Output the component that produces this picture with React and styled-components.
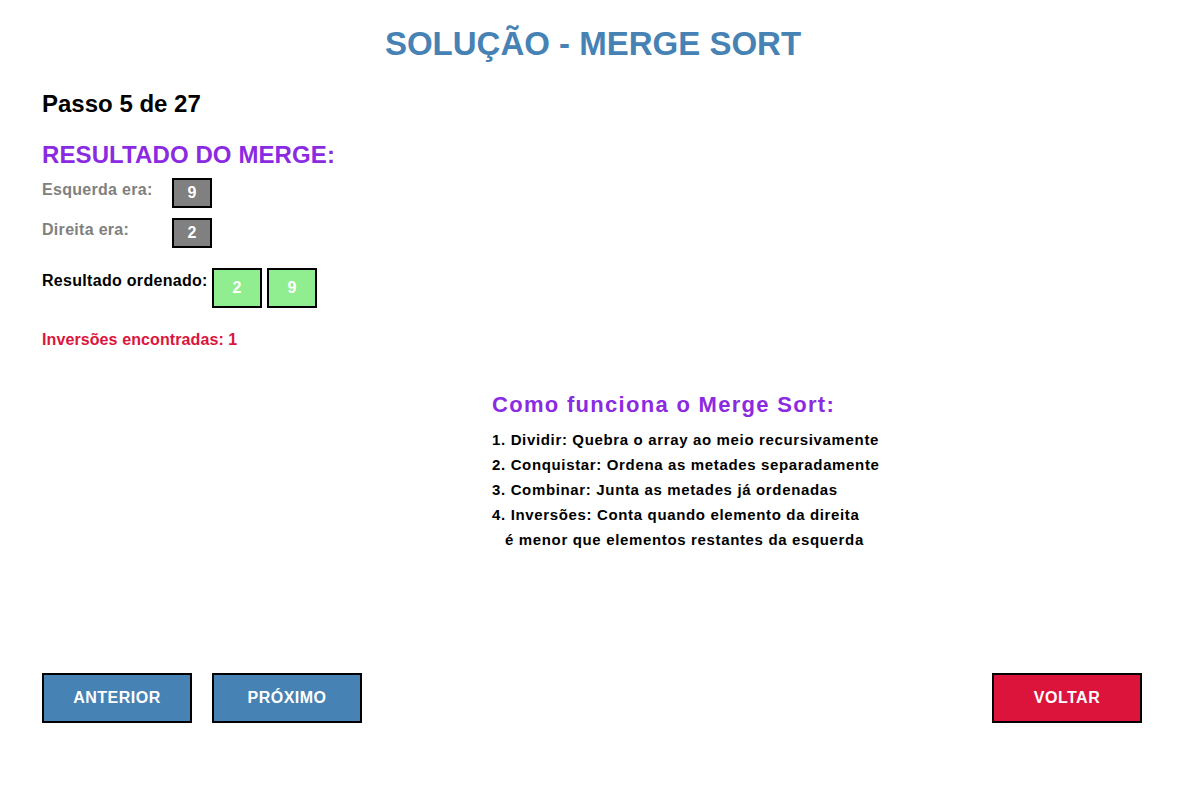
import styled, { createGlobalStyle } from "styled-components";

const GlobalStyle = createGlobalStyle`
  html, body {
    margin: 0;
    padding: 0;
    background: #ffffff;
  }
  body {
    font-family: "Liberation Sans", Arial, sans-serif;
  }
`;

const passos = [
  { n: 1, titulo: "Dividir", texto: "Quebra o array ao meio recursivamente" },
  { n: 2, titulo: "Conquistar", texto: "Ordena as metades separadamente" },
  { n: 3, titulo: "Combinar", texto: "Junta as metades já ordenadas" },
  { n: 4, titulo: "Inversões", texto: "Conta quando elemento da direita" },
];

function App() {
  return (
    <>
      <GlobalStyle />
      <Page>
        <Title>SOLUÇÃO - MERGE SORT</Title>
        <Step>Passo 5 de 27</Step>

        <MergeTitle>RESULTADO DO MERGE:</MergeTitle>
        <Row>
          <Label $muted>Esquerda era:</Label>
          <Cell $kind="old">9</Cell>
        </Row>
        <Row $gap={10}>
          <Label $muted>Direita era:</Label>
          <Cell $kind="old">2</Cell>
        </Row>
        <Row $gap={20}>
          <Label $wide $offset={5}>Resultado ordenado:</Label>
          <Cells>
            <Cell $kind="sorted">2</Cell>
            <Cell $kind="sorted">9</Cell>
          </Cells>
        </Row>
        <Inversions>Inversões encontradas: 1</Inversions>

        <Explain>
          <ExplainTitle>Como funciona o Merge Sort:</ExplainTitle>
          <List>
            {passos.map((p) => (
              <Line key={p.n}>
                {p.n}. {p.titulo}: {p.texto}
              </Line>
            ))}
            <Line $indent>é menor que elementos restantes da esquerda</Line>
          </List>
        </Explain>

        <Footer>
          <NavBtns>
            <Button>ANTERIOR</Button>
            <Button>PRÓXIMO</Button>
          </NavBtns>
          <Button $danger>VOLTAR</Button>
        </Footer>
      </Page>
    </>
  );
}

export default App;

const Page = styled.div`
  width: 1186px;
  height: 791px;
  box-sizing: border-box;
  padding: 27px 44px 0 42px;
  display: flex;
  flex-direction: column;
`;

const Title = styled.h1`
  margin: 0;
  padding-left: 2px;
  text-align: center;
  font-size: 33px;
  line-height: 33px;
  font-weight: 700;
  color: #4682b4;
`;

const Step = styled.h2`
  margin: 32px 0 0;
  font-size: 24px;
  line-height: 24px;
  font-weight: 700;
  color: #000;
`;

const MergeTitle = styled.h3`
  margin: 27px 0 0;
  font-size: 24px;
  line-height: 24px;
  font-weight: 700;
  letter-spacing: 0.1px;
  color: #8a2be2;
`;

const Row = styled.div`
  display: flex;
  align-items: flex-start;
  margin-top: ${(p) => p.$gap ?? 11}px;
`;

const Label = styled.span`
  width: ${(p) => (p.$wide ? 170 : 130)}px;
  margin-top: ${(p) => p.$offset ?? 4}px;
  font-size: 16px;
  line-height: 16px;
  font-weight: 700;
  letter-spacing: 0.3px;
  color: ${(p) => (p.$muted ? "#808080" : "#000")};
  white-space: nowrap;
`;

const Cells = styled.div`
  display: flex;
  gap: 5px;
`;

const Cell = styled.div`
  box-sizing: border-box;
  width: ${(p) => (p.$kind === "sorted" ? 50 : 40)}px;
  height: ${(p) => (p.$kind === "sorted" ? 40 : 30)}px;
  border: 2px solid #000;
  background: ${(p) => (p.$kind === "sorted" ? "#90ee90" : "#808080")};
  color: #fff;
  font-size: 16px;
  font-weight: 700;
  display: flex;
  align-items: center;
  justify-content: center;
`;

const Inversions = styled.p`
  margin: 24px 0 0;
  font-size: 16px;
  line-height: 16px;
  font-weight: 700;
  letter-spacing: 0.1px;
  color: #dc143c;
`;

const Explain = styled.section`
  margin: 46px 0 0 450px;
`;

const ExplainTitle = styled.h3`
  margin: 0;
  font-size: 22px;
  line-height: 22px;
  font-weight: 700;
  letter-spacing: 1.3px;
  color: #8a2be2;
`;

const List = styled.div`
  margin-top: 11px;
`;

const Line = styled.div`
  padding-left: ${(p) => (p.$indent ? 13 : 0)}px;
  font-size: 15px;
  line-height: 25px;
  font-weight: 700;
  letter-spacing: 0.65px;
  color: #000;
  white-space: nowrap;
`;

const Footer = styled.div`
  margin-top: 121px;
  display: flex;
  justify-content: space-between;
`;

const NavBtns = styled.div`
  display: flex;
  gap: 20px;
`;

const Button = styled.button`
  box-sizing: border-box;
  width: 150px;
  height: 50px;
  border: 2px solid #000;
  border-radius: 0;
  background: ${(p) => (p.$danger ? "#dc143c" : "#4682b4")};
  color: #fff;
  font-family: "Liberation Sans", Arial, sans-serif;
  font-size: 16px;
  font-weight: 700;
  letter-spacing: 0.5px;
  padding: 0;
  cursor: pointer;
`;
